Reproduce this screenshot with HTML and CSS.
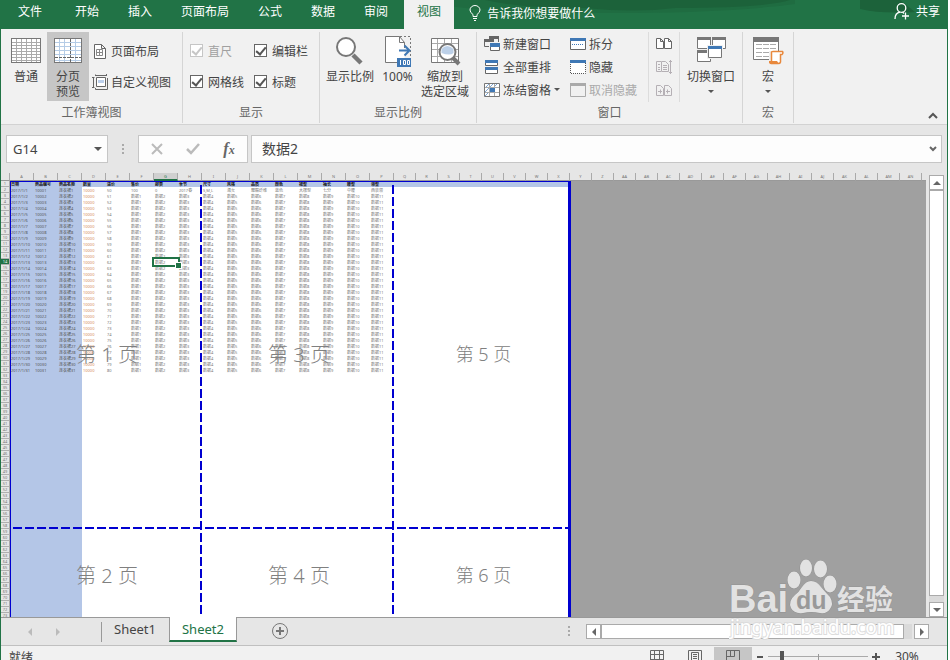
FILE: index.html
```html
<!DOCTYPE html>
<html lang="zh-CN">
<head>
    <meta charset="UTF-8">
    <meta name="viewport" content="width=device-width, initial-scale=1.0">
    <title>Excel</title>
    <link rel="stylesheet" href="styles.css">
</head>
<body>
    <div class="app">
        <header class="titlebar">
            <svg class="titlebar-art" width="490" height="14" viewBox="0 0 490 14" aria-hidden="true">
                <path d="M0 0H360V4Q300 12 200 13Q60 14 0 4Z" fill="#1f6c41"/>
                <path d="M50 0H355Q330 8 240 8Q200 13 150 8Q90 9 50 0Z" fill="#1c623a"/>
                <path d="M425 0H465L480 12Q445 14 425 9Z" fill="#1c623a"/>
            </svg>
            <nav class="tabs">
                <a href="#" class="file">文件</a>
                <a href="#">开始</a>
                <a href="#">插入</a>
                <a href="#">页面布局</a>
                <a href="#">公式</a>
                <a href="#">数据</a>
                <a href="#">审阅</a>
                <a href="#" class="active">视图</a>
            </nav>
            <button class="tell-me">
                <svg width="12" height="16" viewBox="0 0 12 16" fill="none" stroke="#fff"><path d="M4 11.5V9.5Q1 7.500 1 5A5 4.500 0 0 1 11 5Q11 7.500 8 9.500V11.500ZM4 13.500H8M5 15.500H7"/></svg>
                告诉我你想要做什么
            </button>
            <button class="share">
                <svg width="16" height="17" viewBox="0 0 16 17" fill="none" stroke="#fff" stroke-width="1.300"><circle cx="7.500" cy="5" r="4.300"/><path d="M1 16Q1 10 6 9.200M8.500 9L10 10.500M11.500 9.500V16.500M8 13H15"/></svg>
                共享
            </button>
        </header>

        <div class="ribbon">
            <section class="group views">
                <div class="group-body">
                    <button class="big">
                        <svg width="32" height="32" viewBox="0 0 32 32" fill="none" shape-rendering="crispEdges">
                            <rect x="1.500" y="2.500" width="29" height="24" fill="#fff" stroke="#777"/>
                            <path d="M2 6.500H30M2 9.500H30M2 12.500H30M2 15.500H30M2 18.500H30M2 21.500H30M2 24.500H30M6.500 3V26M11.500 3V26M16.500 3V26M21.500 3V26M26.500 3V26" stroke="#aaa"/>
                        </svg>
                        <span>普通</span>
                    </button>
                    <button class="big pressed">
                        <svg width="32" height="32" viewBox="0 0 32 32" fill="none" shape-rendering="crispEdges">
                            <rect x="2.500" y="2.500" width="27" height="24" fill="#fff" stroke="#777"/>
                            <path d="M3 6.500H29M3 10.500H29M3 14.500H29M3 18.500H29M3 24.500H29M7.500 3V26M12.500 3V26M23.500 3V26" stroke="#b5cce6"/>
                            <path d="M18.500 3V26M3 21.500H29" stroke="#666" stroke-dasharray="3 1"/>
                        </svg>
                        <span>分页<br>预览</span>
                    </button>
                    <div class="stack two">
                        <button class="small">
                            <svg width="16" height="16" viewBox="0 0 16 16" fill="none" stroke="#666"><path d="M2.500 1.500H9.500L13.500 5.500V15.500H2.500ZM9.500 1.500V5.500H13.500" fill="#fff"/><path d="M4.500 6.500H10.500V12.500H4.500ZM7.500 6.500V12.500M4.500 9.500H10.500" stroke="#888"/></svg>
                            页面布局
                        </button>
                        <button class="small">
                            <svg width="16" height="16" viewBox="0 0 16 16" fill="none" stroke="#666"><path d="M4.500 3.500H13.500V12.500H4.500Z" fill="#fff"/><path d="M6 6H12V9H6Z" fill="#bcd0ec" stroke="none"/><path d="M3.500 .5V2M3.500 1.500H14.500M14.500 0V2M0 3.500H2.500M1.500 3.500V13.500M0 13.500H2.500M15.500 4V15.500H3.500V14"/></svg>
                            自定义视图
                        </button>
                    </div>
                </div>
                <h2>工作簿视图</h2>
            </section>

            <section class="group show">
                <div class="group-body">
                    <div class="checks">
                        <label class="disabled"><input type="checkbox" checked disabled>直尺</label>
                        <label><input type="checkbox" checked>编辑栏</label>
                        <label><input type="checkbox" checked>网格线</label>
                        <label><input type="checkbox" checked>标题</label>
                    </div>
                </div>
                <h2>显示</h2>
            </section>

            <section class="group zoom">
                <div class="group-body">
                    <button class="big">
                        <svg width="32" height="32" viewBox="0 0 32 32" fill="none"><path d="M19 19L27 27" stroke="#777" stroke-width="4.500"/><circle cx="12" cy="11" r="9" fill="#fff" stroke="#777" stroke-width="2"/></svg>
                        <span>显示比例</span>
                    </button>
                    <button class="big percent-btn">
                        <svg width="32" height="32" viewBox="0 0 32 32" fill="none">
                            <path d="M3.500 .5H17.500L22.500 6.500V26.500H3.500Z" fill="#fff"/>
                            <path d="M15 26.500H3.500V.5H17.500L22.500 6.500V12M17.500 .5V6.500H22.500" stroke="#777"/>
                            <path d="M18 .5H28.500V22" stroke="#777" stroke-dasharray="2 2"/>
                            <path d="M17 14.500H27M22.500 9.500L27.500 14.500L22.500 19.500" stroke="#3f78b5" stroke-width="2"/>
                            <rect x="15" y="22" width="14" height="9" fill="#3f78b5"/>
                            <path d="M18.500 24V29M21.500 24.500H23.500V28.500H21.500ZM25.500 24.500H27.500V28.500H25.500Z" stroke="#fff"/>
                        </svg>
                        <span>100%</span>
                    </button>
                    <button class="big">
                        <svg width="32" height="32" viewBox="0 0 32 32" fill="none">
                            <path d="M2.500 2.500H29.500V26.500H2.500Z" fill="#fff" stroke="#777"/>
                            <path d="M3 7.500H29M3 13.500H29M3 20.500H29M8.500 3V26M15.500 3V26M22.500 3V26" stroke="#aaa"/>
                            <path d="M24 22L30 28" stroke="#777" stroke-width="4"/>
                            <circle cx="18.500" cy="16" r="8" fill="#fff" stroke="#777" stroke-width="2"/>
                            <path d="M12.500 17V13Q18 7 24.500 13V17Q21 20 12.500 17Z" fill="#bcd0e8"/>
                        </svg>
                        <span>缩放到<br>选定区域</span>
                    </button>
                </div>
                <h2>显示比例</h2>
            </section>

            <section class="group window">
                <div class="group-body">
                    <div class="stack three first">
                        <button class="small">
                            <svg width="16" height="16" viewBox="0 0 16 16" fill="none"><path d="M5 0H15V3H5ZM0 3H10V6H0Z" fill="#666"/><path d="M.5 5V10.500H5M14.500 3V6" stroke="#666"/><path d="M6.500 8.500H15.500V14.500H6.500Z" fill="#fff" stroke="#666"/><path d="M6 7H16V11H6Z" fill="#3f78b5"/></svg>
                            新建窗口
                        </button>
                        <button class="small">
                            <svg width="16" height="16" viewBox="0 0 16 16" fill="none"><path d="M1.500 1.500H13.500V6.500H1.500ZM1.500 9.500H13.500V14.500H1.500Z" fill="#fff" stroke="#666"/><path d="M1 1H14V4H1ZM1 8H14V11H1Z" fill="#3f78b5"/></svg>
                            全部重排
                        </button>
                        <button class="small">
                            <svg width="16" height="16" viewBox="0 0 16 16" fill="none"><path d="M.5 1.500H15.500V14.500H.5Z" fill="#fff" stroke="#777"/><path d="M1 6L5 2M1 10L5 6M6 5L9 2M10 5L13 2M1 14L5 10" stroke="#7da6d3"/><path d="M5.500 2V14M10.500 2V14M1 5.500H15M1 10.500H15" stroke="#aaa"/><path d="M6 6H11V10H6Z" fill="#3f78b5"/></svg>
                            冻结窗格<i class="caret"></i>
                        </button>
                    </div>
                    <div class="stack three">
                        <button class="small">
                            <svg width="16" height="16" viewBox="0 0 16 16" fill="none"><path d="M.5 2.500H15.500V13.500H.5Z" fill="#fff" stroke="#666"/><path d="M0 2H16V5H0Z" fill="#3f78b5"/><path d="M2 8.500H14" stroke="#3f78b5" stroke-dasharray="1 1"/></svg>
                            拆分
                        </button>
                        <button class="small">
                            <svg width="16" height="16" viewBox="0 0 16 16" fill="none"><path d="M.5 3V14.500H15.500V3" fill="#fff" stroke="#555" stroke-dasharray="1 1"/><path d="M0 1H16V4H0Z" fill="#3f78b5"/></svg>
                            隐藏
                        </button>
                        <button class="small" disabled>
                            <svg width="16" height="16" viewBox="0 0 16 16" fill="none"><path d="M.5 2.500H15.500V14.500H.5Z" stroke="#aaa"/><path d="M0 1H16V4H0Z" fill="#aaa"/></svg>
                            取消隐藏
                        </button>
                    </div>
                    <div class="stack three icons">
                        <button class="small" aria-label="并排查看">
                            <svg width="16" height="16" viewBox="0 0 16 16" fill="none" stroke="#666"><path d="M.5 2.500H4.500L7.500 5.500V12.500H.5ZM8.500 2.500H12.500L15.500 5.500V12.500H8.500ZM4.500 2.500V5.500H7.500M12.500 2.500V5.500H15.500" fill="#fff"/></svg>
                        </button>
                        <button class="small" aria-label="同步滚动" disabled>
                            <svg width="16" height="16" viewBox="0 0 16 16" fill="none" stroke="#b5b0b5"><path d="M5 2.500H.5V12.500H5M5.500 2.500H9.500L12.500 5.500V12.500H5.500ZM2 5.500H4M2 8.500H4M2 10.500H4M7 6.500H11M7 8.500H11M7 10.500H11M14.500 1V15M13 2.500H16M13 13.500H16"/></svg>
                        </button>
                        <button class="small" aria-label="重设窗口位置" disabled>
                            <svg width="16" height="16" viewBox="0 0 16 16" fill="none" stroke="#b5b0b5"><path d="M.5 3.500H4.500L7.500 6.500V13.500H.5ZM8.500 3.500H12.500L15.500 6.500V13.500H8.500ZM2 9.500H6M4.500 7.500V11.500M10 9.500H14M11.500 7.500V11.500"/></svg>
                        </button>
                    </div>
                    <button class="big switch">
                        <svg width="32" height="32" viewBox="0 0 32 32" fill="none">
                            <path d="M2.500 2.500H15.500V12.500H2.500ZM17.500 2.500H30.500V12.500H17.500ZM2.500 15.500H15.500V25.500H2.500Z" fill="#fff" stroke="#777"/>
                            <path d="M2 1H16V4H2ZM17 1H31V4H17ZM2 14H16V17H2Z" fill="#777"/>
                            <path d="M12 9H28V23H12Z" fill="#f1f1f1"/>
                            <path d="M13.500 11.500H26.500V21.500H13.500Z" fill="#fff" stroke="#777"/><path d="M13 10H27V13H13Z" fill="#3f78b5"/>
                        </svg>
                        <span>切换窗口</span><i class="caret"></i>
                    </button>
                </div>
                <h2>窗口</h2>
            </section>

            <section class="group macros">
                <div class="group-body">
                    <button class="big">
                        <svg width="32" height="32" viewBox="0 0 32 32" fill="none">
                            <path d="M1.500 2.500H26.500V23.500H1.500Z" fill="#fff" stroke="#777"/><path d="M1 1H27V6H1Z" fill="#777"/>
                            <path d="M4 8.500H24M4 12.500H24M4 16.500H24M4 20.500H18" stroke="#aaa" stroke-dasharray="6 1"/>
                            <path d="M17 15H30V29H17Z" fill="#f1f1f1"/><path d="M19.500 16.500Q19 15.500 21 15.500H30.500Q31.500 17 30 18.500H28.500V26Q28 28 25 27.500H19.500Z" fill="#fff" stroke="#e8883c" stroke-width="1.500"/><path d="M17 25H25L27 28H18Q16.500 27 17 25Z" fill="#e8883c"/>
                        </svg>
                        <span>宏</span><i class="caret"></i>
                    </button>
                </div>
                <h2>宏</h2>
            </section>
            <button class="collapse" aria-label="折叠功能区"><svg width="10" height="7" viewBox="0 0 10 7" fill="none" stroke="#555" stroke-width="2"><path d="M1 6L5 2L9 6"/></svg></button>
        </div>

        <div class="formula-bar">
            <div class="name-box">
                <input type="text" value="G14" aria-label="名称框">
                <button aria-label="名称列表"><i class="caret"></i></button>
            </div>
            <i class="dots"></i>
            <div class="formula-buttons">
                <button aria-label="取消" disabled><svg width="12" height="12" viewBox="0 0 12 12" stroke="#bbb" stroke-width="2"><path d="M1 1L11 11M11 1L1 11"/></svg></button>
                <button aria-label="输入" disabled><svg width="14" height="12" viewBox="0 0 14 12" fill="none" stroke="#bbb" stroke-width="2.500"><path d="M1 6L5 10L13 1"/></svg></button>
                <button aria-label="插入函数" class="fx">f<small>x</small></button>
            </div>
            <div class="formula">
                <input type="text" value="数据2" aria-label="编辑栏">
                <button aria-label="展开编辑栏"><svg width="8" height="6" viewBox="0 0 8 6" fill="none" stroke="#666" stroke-width="2"><path d="M1 1L4 4L7 1"/></svg></button>
            </div>
        </div>

        <main class="workspace">
            <div class="sheet">
                <table id="grid"></table>
                <div class="pages">
                    <span>第 1 页</span>
                    <span>第 3 页</span>
                    <span class="narrow">第 5 页</span>
                    <span>第 2 页</span>
                    <span>第 4 页</span>
                    <span class="narrow">第 6 页</span>
                    <i class="break-v first"></i>
                    <i class="break-v second"></i>
                    <i class="break-h"></i>
                </div>
            </div>
            <div class="scroll-v">
                <button aria-label="向上滚动"><i class="arrow up"></i></button>
                <div class="track"><div class="thumb"></div></div>
                <button aria-label="向下滚动"><i class="arrow down"></i></button>
            </div>
        </main>

        <div class="sheet-bar">
            <div class="sheet-nav">
                <button aria-label="上一个工作表"><i class="arrow left"></i></button>
                <button aria-label="下一个工作表"><i class="arrow right"></i></button>
            </div>
            <a href="#" class="sheet-tab">Sheet1</a>
            <a href="#" class="sheet-tab active">Sheet2</a>
            <button class="add-sheet" aria-label="新工作表"><svg width="18" height="18" viewBox="0 0 18 18" fill="none" stroke="#777"><circle cx="9" cy="9" r="7.500"/><path d="M5 9H13M9 5V13" stroke-width="2"/></svg></button>
            <i class="dots"></i>
            <div class="scroll-h">
                <button aria-label="向左滚动"><i class="arrow left"></i></button>
                <div class="track"><div class="thumb"></div></div>
                <button aria-label="向右滚动"><i class="arrow right"></i></button>
            </div>
        </div>

        <footer class="status-bar">
            <span class="ready">就绪</span>
            <button aria-label="普通视图"><svg width="14" height="14" viewBox="0 0 14 14" fill="none" stroke="#666"><path d="M.5 .5H13.500V13.500H.5ZM4.500 .5V13.500M9.500 .5V13.500M.5 4.500H13.500M.5 9.500H13.500"/></svg></button>
            <button aria-label="页面布局视图"><svg width="14" height="14" viewBox="0 0 14 14" fill="none" stroke="#666"><path d="M.5 .5H13.500V13.500H.5ZM3.500 2.500H10.500V11.500H3.500ZM5 4.500H9M5 6.500H9M5 8.500H9"/></svg></button>
            <button aria-label="分页预览" class="pressed"><svg width="14" height="14" viewBox="0 0 14 14" fill="none" stroke="#666"><path d="M.5 .5H13.500V13.500H.5ZM4.500 .5V6.500M8.500 .5V6.500M.5 6.500H8.500"/></svg></button>
            <button class="step" aria-label="缩小"><svg width="8" height="10" viewBox="0 0 8 10" stroke="#555" stroke-width="2"><path d="M1 5H7"/></svg></button>
            <input type="range" min="0" max="100" value="12" aria-label="缩放">
            <button class="step" aria-label="放大"><svg width="10" height="10" viewBox="0 0 10 10" stroke="#555" stroke-width="2"><path d="M1 5H9M5 1V9"/></svg></button>
            <button class="percent">30%</button>
        </footer>

        <svg class="watermark" width="172" height="86" viewBox="0 0 172 86" role="img" aria-label="百度经验">
            <g class="logo">
                <text x="0" y="57" font-size="38">Bai</text>
                <ellipse cx="65" cy="25" rx="6.500" ry="8.500"/>
                <ellipse cx="77" cy="13" rx="6" ry="8.500"/>
                <ellipse cx="91.500" cy="14" rx="6.500" ry="8.500"/>
                <ellipse cx="101" cy="29" rx="6.500" ry="8.500"/>
                <path d="M82 26Q88 26 92 32Q97 38 101 42Q105 49 101 54Q98 59 91 58Q82 56 74 58Q65 59 62 53Q59 46 66 40Q70 37 73 32Q77 26 82 26Z"/>
                <text x="108" y="55" font-size="28">经验</text>
            </g>
            <text x="67" y="54" class="du">du</text>
            <text x="1" y="79" class="url">jingyan.baidu.com</text>
        </svg>
    </div>

    <script src="script.js"></script>
</body>
</html>
```

FILE: styles.css
```css
* {
    box-sizing: border-box;
}

body {
    margin: 0;
    height: 100vh;
    overflow: hidden;
    background: #fff;
    color: #444;
    font-family: "Noto Sans", "Noto Sans CJK SC", sans-serif;
    font-size: 12px;
}

button,
input {
    font: inherit;
    color: inherit;
    border: none;
    background: none;
    margin: 0;
    padding: 0;
}

button {
    display: flex;
    align-items: center;
    justify-content: center;
    white-space: nowrap;
}

a {
    color: inherit;
    text-decoration: none;
}

svg {
    display: block;
    flex: none;
}

/* the status bar runs a little below the window edge */
.app {
    position: relative;
    display: flex;
    flex-direction: column;
    height: calc(100vh + 7px);
    margin-right: 2px;
    border: solid #217346;
    border-width: 0 1px;
    background: #e6e6e6;
}

/* title bar */
.titlebar {
    position: relative;
    display: flex;
    height: 29px;
    background: #217346;
    color: #fff;
}

.titlebar-art {
    position: absolute;
    top: 0;
    right: 22px;
}

.tabs {
    position: relative;
    display: flex;
    gap: 3px;
    padding-left: 4px;
}

.tabs a {
    padding: 0 13px;
    line-height: 24px;
}

.tabs .file {
    margin-right: 4px;
}

.tabs .active {
    background: #f1f1f1;
    color: #217346;
}

.tell-me,
.share {
    position: relative;
    height: 26px;
    gap: 6px;
}

.tell-me {
    margin-left: 15px;
}

.share {
    height: 22px;
    margin-left: auto;
    margin-right: 7px;
}

/* ribbon */
.ribbon {
    display: flex;
    padding: 3px 0 1px;
    background: #f1f1f1;
    border-bottom: 1px solid #d2d2d2;
}

.group {
    border-right: 1px solid #d5d5d5;
}

.group-body {
    display: flex;
    height: 70px;
}

.group h2 {
    margin: 0;
    font-size: 12px;
    font-weight: 400;
    line-height: 21px;
    text-align: center;
    color: #666;
}

.big {
    flex-direction: column;
    justify-content: flex-start;
    width: 50px;
    height: 69px;
    padding-top: 4px;
    line-height: 15px;
}

.big svg {
    margin-bottom: 1px;
}

.big .caret {
    margin-top: 6px;
}

.pressed {
    background: #c6c6c6;
}

.views .group-body {
    padding: 0 11px 0 4px;
}

.views .big {
    width: 42px;
}

.zoom .group-body {
    padding: 0 6px 0 5px;
}

.zoom .percent-btn {
    width: 45px;
}

.stack {
    display: flex;
    flex-direction: column;
}

.stack.two {
    padding-top: 3px;
    margin-left: 3px;
}

.two .small {
    height: 31px;
}

.three .small {
    height: 23px;
}

.small {
    justify-content: flex-start;
    gap: 3px;
}

.small:disabled {
    color: #aaa;
}

.window .group-body {
    padding: 0 6px 0 7px;
}

.stack.first {
    width: 86px;
}

.stack.icons {
    margin-left: 11px;
    margin-right: 6px;
    padding: 0 7px;
    border: solid #dcdcdc;
    border-width: 0 1px;
}

.caret {
    border: 3px solid transparent;
    border-top-color: #555;
    border-bottom: none;
}

.checks {
    display: grid;
    grid-template-columns: 64px auto;
    grid-auto-rows: 31px;
    padding: 3px 11px 0 7px;
}

.checks label {
    display: flex;
    align-items: center;
    gap: 5px;
}

.checks .disabled {
    color: #a0a0a0;
}

.checks input {
    appearance: none;
    display: flex;
    justify-content: center;
    width: 13px;
    height: 13px;
    border: 1px solid #666;
    background: #fff;
}

.checks input::after {
    content: "";
    width: 4px;
    height: 8px;
    border: solid #555;
    border-width: 0 2px 2px 0;
    transform: rotate(40deg);
}

.checks input:disabled,
.checks input:disabled::after {
    border-color: #c6c6c6;
}

.collapse {
    align-self: flex-end;
    margin: 0 9px 4px auto;
}

/* formula bar */
.formula-bar {
    display: flex;
    height: 48px;
    padding: 10px 5px 11px;
    font-size: 14px;
}

.name-box,
.formula-buttons,
.formula {
    display: flex;
    height: 28px;
    border: 1px solid #c6c6c6;
    background: #fdfdfd;
}

.name-box {
    width: 102px;
    padding: 0 5px 0 6px;
    font-size: 13px;
}

.name-box input,
.formula input {
    flex: 1;
    min-width: 0;
    outline: none;
}

.formula input {
    height: 24px;
}

.name-box .caret {
    border-width: 4px;
    border-bottom: none;
}

.dots {
    width: 2px;
    height: 11px;
    background: repeating-linear-gradient(#aaa 0 2px, transparent 2px 4px);
}

.formula-bar .dots {
    margin: 9px 14px 0;
}

.formula-buttons {
    width: 110px;
    justify-content: space-around;
}

.formula-buttons button {
    width: 36px;
}

.fx {
    font-family: "Liberation Serif", serif;
    font-style: italic;
    font-weight: 700;
    font-size: 16px;
    color: #666;
}

.fx small {
    font-size: 12px;
    align-self: center;
    padding-top: 3px;
}

.formula {
    flex: 1;
    margin-left: 3px;
    padding: 0 4px 0 10px;
}

/* worksheet */
.workspace {
    flex: 1;
    min-height: 0;
    display: flex;
}

.sheet {
    position: relative;
    flex: 1;
    min-width: 0;
    overflow: hidden;
    background: linear-gradient(#e6e6e6 7px, #999 7px 8px, #a0a0a0 8px);
}

#grid {
    table-layout: fixed;
    width: 0;
    border-collapse: separate;
    border-spacing: 0;
    font-size: 4px;
    line-height: 5px;
    color: #777;
}

#grid th,
#grid td {
    padding: 0;
    height: 6px;
    overflow: hidden;
    white-space: nowrap;
    font-weight: 400;
    text-align: left;
}

#grid td {
    background: #fff;
    padding-left: 1px;
}

#grid thead th {
    height: 8px;
    text-align: center;
    border-right: 1px solid #aaa;
    border-bottom: 1px solid #999;
    background: #e6e6e6;
}

#grid thead th.current {
    background: #d0d0d0;
    border-bottom: 2px solid #217346;
    color: #217346;
}

#grid tbody th {
    text-align: center;
    background: #e6e6e6;
    border-bottom: 1px solid #b0b0b0;
    border-right: 1px solid #aaa;
}

#grid tbody th.current {
    background: #217346;
    color: #fff;
}

#grid td.filled {
    background: #b4c6e7;
    color: #555;
}

#grid td.title {
    color: #111;
    font-weight: 700;
}

#grid td.amount {
    color: #d58a5a;
}

#grid td.selected {
    outline: 2px solid #217346;
    overflow: visible;
    position: relative;
}

#grid td.selected::after {
    content: "";
    position: absolute;
    right: -3px;
    bottom: -3px;
    width: 5px;
    height: 5px;
    background: #217346;
    outline: 1px solid #fff;
}

.col-head {
    width: 9px;
}

.col-data {
    width: 24px;
}

.col-empty {
    width: 22px;
}

/* page outlines and numbers drawn over the cells */
.pages {
    position: absolute;
    top: 8px;
    left: 9px;
    display: grid;
    grid-template-columns: 192px 192px 177px;
    grid-template-rows: 346px 96px;
    border: 1px solid #0000d0;
    border-right-width: 3px;
    border-bottom: none;
    place-items: center;
    width: 561px;
    font-size: 20px;
    font-weight: 300;
    color: #808080;
    pointer-events: none;
}

.pages span {
    padding-bottom: 4px;
}

.pages .narrow {
    font-size: 18px;
}

.break-v,
.break-h {
    position: absolute;
}

.break-v {
    top: 3px;
    bottom: 0;
    width: 2px;
    background: repeating-linear-gradient(#0000d0 0 9px, transparent 9px 12px);
}

.break-v.first {
    left: 189px;
}

.break-v.second {
    left: 381px;
}

.break-h {
    top: 345px;
    left: 2px;
    right: 0;
    height: 2px;
    background: repeating-linear-gradient(90deg, #0000d0 0 9px, transparent 9px 12px);
}

/* scroll bars */
.scroll-v {
    display: flex;
    flex-direction: column;
    width: 15px;
    margin: 2px 3px 0;
}

.scroll-v button,
.scroll-h button {
    width: 15px;
    height: 15px;
    border: 1px solid #aaa;
    background: #fff;
}

.track {
    flex: 1;
    background: #dadada;
}

.thumb {
    border: 1px solid #aaa;
    background: #fff;
}

.scroll-v .thumb {
    height: calc(100% - 6px);
}

.arrow {
    border: 4px solid transparent;
}

.arrow.up {
    border-bottom-color: #666;
    border-top: none;
}

.arrow.down {
    border-top-color: #666;
    border-bottom: none;
}

.arrow.left {
    border-right-color: #666;
    border-left: none;
}

.arrow.right {
    border-left-color: #666;
    border-right: none;
}

/* sheet tabs */
.sheet-bar {
    display: flex;
    height: 28px;
    border-top: 1px solid #999;
}

.sheet-nav {
    display: flex;
    gap: 24px;
    width: 101px;
    height: 20px;
    margin-top: 4px;
    padding-left: 27px;
    border-right: 1px solid #999;
}

.sheet-nav .left {
    border-right-color: #bbb;
}

.sheet-nav .right {
    border-left-color: #bbb;
}

.sheet-tab {
    height: 24px;
    padding: 0 13px 0 12px;
    font-size: 13px;
    line-height: 22px;
}

.sheet-tab.active {
    height: 25px;
    margin-top: -1px;
    padding: 0 12px;
    line-height: 24px;
    background: #fff;
    color: #217346;
    border: solid #999;
    border-width: 0 1px;
    border-bottom: 2px solid #217346;
}

.add-sheet {
    height: 26px;
    margin-left: 34px;
}

.sheet-bar .dots {
    margin: 8px 16px 0 auto;
}

.scroll-h {
    display: flex;
    width: 37%;
    max-width: 343px;
    height: 15px;
    margin: 6px 18px 0 0;
}

.scroll-h .track {
    margin-right: 2px;
}

.scroll-h .thumb {
    width: calc(100% - 8px);
    height: 15px;
}

/* status bar */
.status-bar {
    display: flex;
    align-items: center;
    height: 22px;
    background: #f1f1f1;
    border-top: 1px solid #c0c0c0;
}

.ready {
    margin-right: auto;
    padding-left: 8px;
}

.status-bar button {
    width: 38px;
    height: 19px;
}

.status-bar .step {
    width: 16px;
}

.status-bar .percent {
    width: 46px;
    margin-right: 17px;
}

.status-bar input {
    appearance: none;
    width: 100px;
    height: 14px;
    background:
        linear-gradient(#999, #999) center / 1px 6px no-repeat,
        linear-gradient(#aaa, #aaa) center / 100% 1px no-repeat;
}

.status-bar input::-webkit-slider-thumb {
    appearance: none;
    width: 4px;
    height: 12px;
    background: #555;
}

.watermark {
    position: absolute;
    right: 46px;
    bottom: 26px;
    font-family: "Liberation Sans", "Noto Sans CJK SC", sans-serif;
    font-weight: 700;
    pointer-events: none;
}

.watermark .logo {
    fill: #e2e2e2;
    stroke: #929292;
    stroke-width: 1px;
    paint-order: stroke;
}

.watermark .du {
    font-size: 25px;
    fill: #999;
}

.watermark .url {
    font-family: "Noto Sans", sans-serif;
    font-size: 19px;
    font-weight: 400;
    fill: #fff;
    stroke: #dcdcdc;
    paint-order: stroke;
    stroke-width: 2px;
}
```

FILE: script.js
```js
const grid = document.getElementById('grid');

const titles = ['日期', '商品编号', '商品名称', '数量', '进价', '售价', '邮费', '季节',
    '尺寸', '风格', '品质', '颜色', '裙型', '袖长', '腰型', '领型'];
const firstRow = ['2017/1/1', '10001', '连衣裙1', '10000', '50', '100', '0', '2017春',
    'S,M,L', '淑女', '聚酯纤维', '蓝色', '大摆型', '七分', '中腰', '西装领'];

const PAGE_COLS = 24;
const ALL_COLS = 40;
const ROWS = 73;

function colName(i) {
    return i < 26 ? String.fromCharCode(65 + i) : 'A' + String.fromCharCode(65 + i - 26);
}

function cellText(row, col) {
    if (col > 15 || row > 32) return '';
    if (row === 1) return titles[col];
    if (row === 2) return firstRow[col];
    const n = row - 1;
    if (col === 0) return '2017/1/' + n;
    if (col === 1) return String(10000 + n);
    if (col === 2) return '连衣裙' + n;
    if (col === 3) return '10000';
    if (col === 4) return String(49 + n);
    return '数据' + (col - 4);
}

let html = '<colgroup><col class="col-head"><col span="16" class="col-data"><col span="24" class="col-empty"></colgroup>';

html += '<thead><tr><th></th>';
for (let c = 0; c < ALL_COLS; c++) {
    html += `<th${c === 6 ? ' class="current"' : ''}>${colName(c)}</th>`;
}
html += '</tr></thead><tbody>';

for (let r = 1; r <= ROWS; r++) {
    html += `<tr><th${r === 14 ? ' class="current"' : ''}>${r}</th>`;
    for (let c = 0; c < PAGE_COLS; c++) {
        const names = [];
        if (r === 1 || c < 3) names.push('filled');
        if (r === 1) names.push('title');
        if (r > 1 && c === 3) names.push('amount');
        if (r === 14 && c === 6) names.push('selected');
        html += `<td class="${names.join(' ')}">${cellText(r, c)}</td>`;
    }
    html += '</tr>';
}

grid.innerHTML = html + '</tbody>';
```
